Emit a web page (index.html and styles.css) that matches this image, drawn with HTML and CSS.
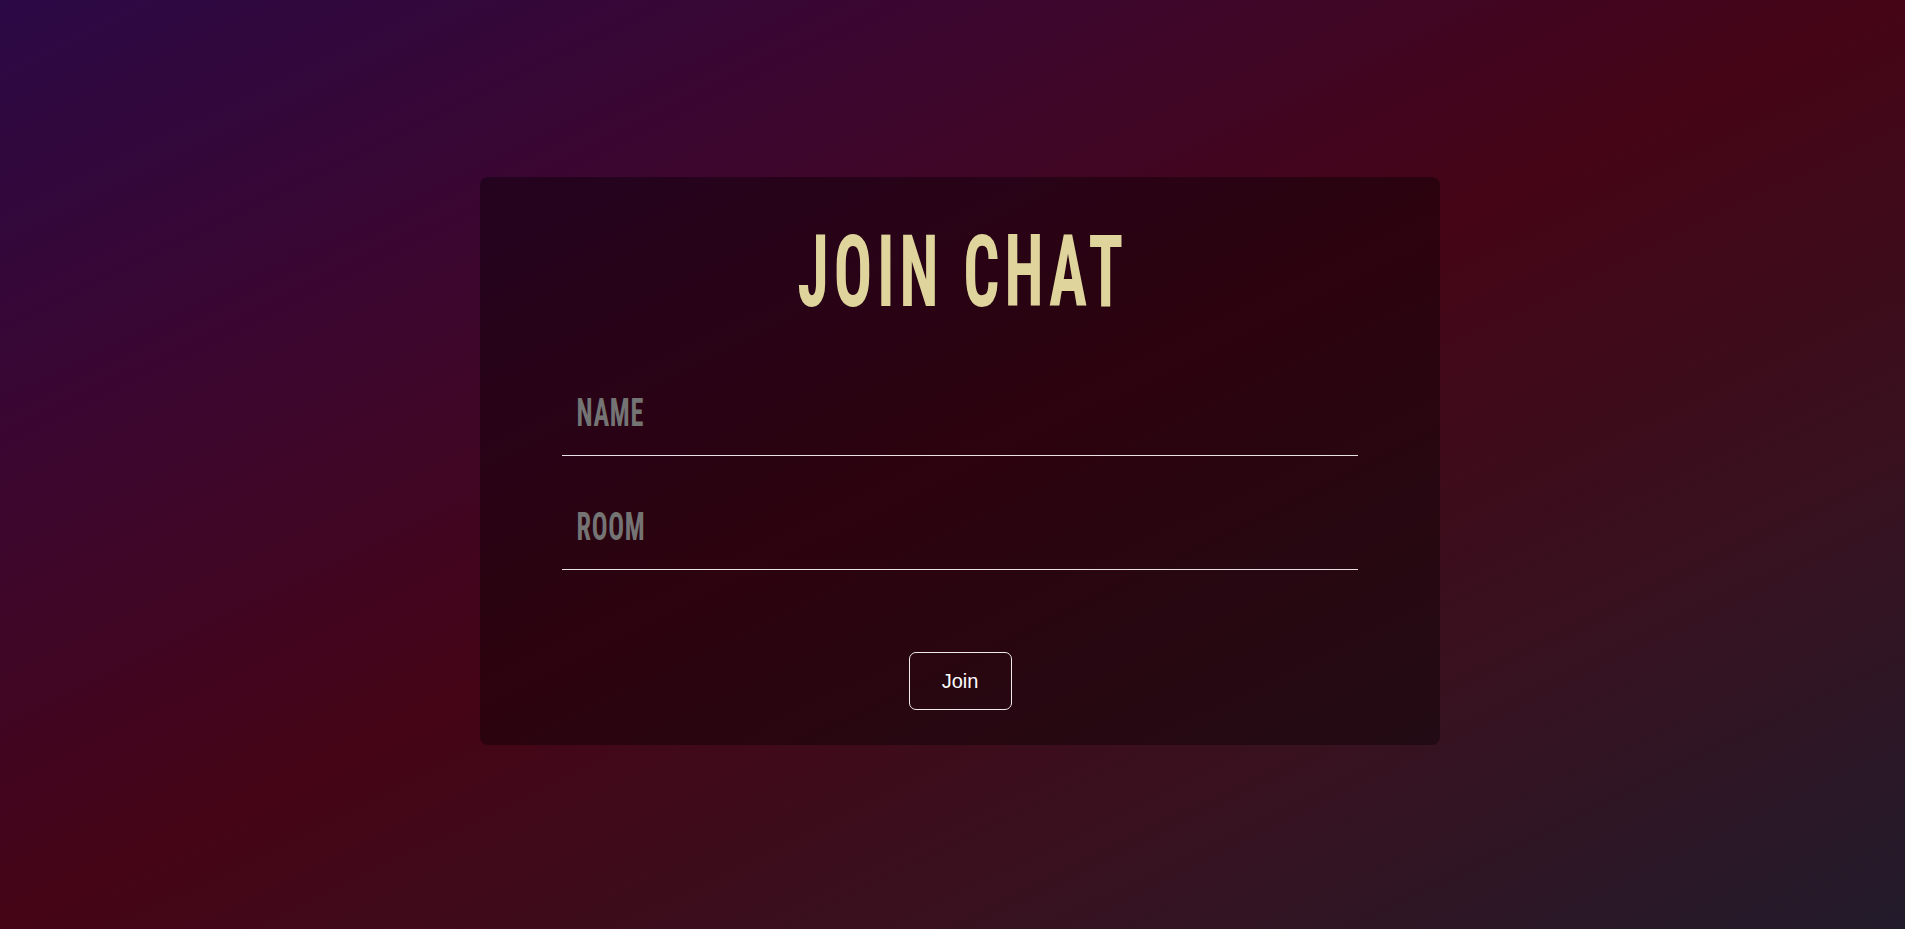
FILE: index.html
```html
<!DOCTYPE html>
<html lang="en">
<head>
<meta charset="utf-8">
<title>Join Chat</title>
<link rel="stylesheet" href="styles.css">
</head>
<body>
<main class="page">
  <form class="card">
    <h1 class="title">Join Chat</h1>
    <div class="field field-name"><input class="input" type="text" placeholder="Name"></div>
    <div class="field field-room"><input class="input" type="text" placeholder="Room"></div>
    <button class="join" type="button">Join</button>
  </form>
</main>
</body>
</html>
```

FILE: styles.css
```css
html, body {
  margin: 0;
  height: 100%;
}
body {
  background: linear-gradient(to bottom right, #2b0945 0%, #3b0630 25%, #450516 50%, #38111f 75%, #221b2b 100%);
  font-family: "Liberation Sans", Arial, sans-serif;
}
.page {
  box-sizing: border-box;
  height: 100%;
  padding: 177px 0 0 15px;
  display: flex;
  justify-content: center;
  align-items: flex-start;
}
.card {
  box-sizing: border-box;
  width: 960px;
  padding: 45px 82px 35px;
  background: rgba(0, 0, 0, 0.36);
  border-radius: 8px;
  display: flex;
  flex-direction: column;
  align-items: center;
}
.title {
  margin: 0;
  font-family: "Roboto", "Liberation Sans", sans-serif;
  font-stretch: 75%;
  font-weight: 700;
  font-size: 101px;
  line-height: 100px;
  height: 100px;
  letter-spacing: 8px;
  text-indent: 8px;
  text-transform: uppercase;
  color: #dfd59c;
  transform: scaleX(0.63);
  white-space: nowrap;
}
.field {
  align-self: stretch;
  height: 84px;
  border-bottom: 1px solid #e8e2e6;
  overflow: hidden;
}
.field-name { margin-top: 49px; }
.field-room { margin-top: 29px; }
.input {
  box-sizing: border-box;
  width: 145%;
  height: 83px;
  padding: 0 0 0 21px;
  margin: 0;
  border: 0;
  outline: none;
  background: transparent;
  color: #dcdcdc;
  font-family: "Roboto", "Liberation Sans", sans-serif;
  font-stretch: 75%;
  font-weight: 700;
  font-size: 38px;
  letter-spacing: 1px;
  text-transform: uppercase;
  transform: scaleX(0.69);
  transform-origin: left center;
}
.input::placeholder {
  color: #747474;
  opacity: 1;
}
.join {
  margin-top: 82px;
  width: 103px;
  height: 58px;
  border: 1px solid #f0eaee;
  border-radius: 7px;
  background: transparent;
  color: #ffffff;
  font-family: "Liberation Sans", Arial, sans-serif;
  font-size: 20px;
  cursor: pointer;
}
```
